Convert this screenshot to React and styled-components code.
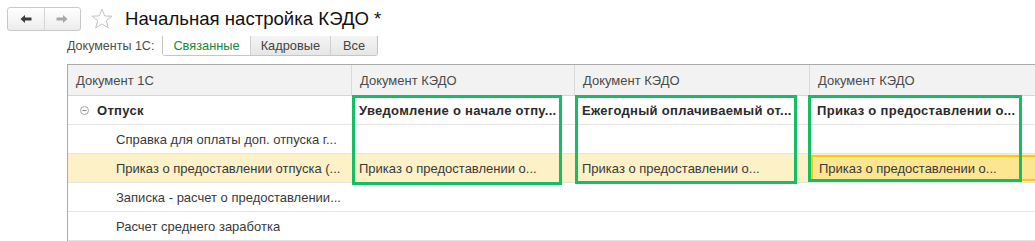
import React from "react";
import styled, { createGlobalStyle } from "styled-components";

const Global = createGlobalStyle`
  body {
    margin: 0;
    background: #fff;
    font-family: "Liberation Sans", Arial, sans-serif;
    overflow: hidden;
  }
`;

const Page = styled.div`
  width: 1035px;
  height: 241px;
  overflow: hidden;
`;

const TopBar = styled.div`
  display: flex;
  align-items: center;
  padding: 6px 0 0 7px;
  height: 25px;
`;

const NavGroup = styled.div`
  display: flex;
  width: 74px;
  height: 24px;
  border: 1px solid #c9c9c9;
  border-radius: 3px;
  background: linear-gradient(#ffffff, #ececec);
  box-sizing: border-box;
`;

const NavButton = styled.div`
  flex: 1;
  display: flex;
  align-items: center;
  justify-content: center;
  border-left: ${(p) => (p.divider ? "1px solid #d4d4d4" : "none")};
`;

const Star = styled.div`
  margin-left: 10px;
  width: 22px;
  height: 22px;
  display: flex;
`;

const Title = styled.h1`
  margin: 0 0 0 12px;
  font-size: 18.6px;
  font-weight: normal;
  color: #111;
  line-height: 22px;
`;

const FilterRow = styled.div`
  display: flex;
  align-items: center;
  margin: 5px 0 0 67px;
  height: 20px;
`;

const FilterLabel = styled.span`
  font-size: 12.5px;
  color: #4d4d4d;
  margin-right: 8px;
`;

const Tabs = styled.div`
  display: flex;
  height: 20px;
  border: 1px solid #c6c6c6;
  border-top: none;
  border-radius: 0 0 3px 3px;
  box-sizing: border-box;
`;

const Tab = styled.div`
  display: flex;
  align-items: center;
  padding: 0 ${(p) => p.pad || 10}px;
  font-size: 12.8px;
  color: ${(p) => (p.active ? "#138a42" : "#444")};
  background: ${(p) => (p.active ? "#fff" : "linear-gradient(#f4f4f4, #e6e6e6)")};
  border-left: ${(p) => (p.first ? "none" : "1px solid #cfcfcf")};
`;

const TableWrap = styled.div`
  position: relative;
  margin: 8px 0 0 67px;
  border-left: 1px solid #aaa;
  border-top: 1px solid #aaa;
`;

const Grid = styled.div`
  display: grid;
  grid-template-columns: 283px 223px 235px 230px;
`;

const HeadCell = styled.div`
  height: 30px;
  display: flex;
  align-items: center;
  padding-left: 8px;
  background: #f2f2f2;
  border-bottom: 1px solid #d6d6d6;
  border-left: ${(p) => (p.first ? "none" : "1px solid #d9d9d9")};
  font-size: 13px;
  color: #4b4b4b;
  white-space: nowrap;
`;

const Cell = styled.div`
  height: 28px;
  display: flex;
  align-items: center;
  padding-left: ${(p) => p.indent || 8}px;
  border-bottom: 1px solid #e3e3e3;
  background: ${(p) => (p.hl ? "#fcf1c7" : "#fff")};
  font-size: 13px;
  font-weight: ${(p) => (p.bold ? "bold" : "normal")};
  letter-spacing: ${(p) => (p.bold ? "0.3px" : "0")};
  color: ${(p) => (p.bold ? "#2b2b2b" : "#3a3a3a")};
  white-space: nowrap;
  overflow: hidden;
  min-width: 0;
`;

const Selected = styled.div`
  flex: 1;
  align-self: stretch;
  margin: 1px 0 1px -6px;
  padding-left: 6px;
  display: flex;
  align-items: center;
  background: #fde591;
  border: 2px solid #f6c914;
  border-right: none;
`;

const Text = styled.span`
  overflow: hidden;
  text-overflow: ellipsis;
  max-width: ${(p) => p.max}px;
`;

const Toggle = styled.span`
  width: 9px;
  height: 9px;
  margin-right: 8px;
  display: inline-flex;
`;

const Mark = styled.div`
  position: absolute;
  top: 30px;
  left: ${(p) => p.left}px;
  width: ${(p) => p.w}px;
  height: ${(p) => p.h}px;
  border: 3px solid #15bd63;
  box-sizing: border-box;
`;

const Arrow = ({ color, flip }) => (
  <svg width="12" height="10" viewBox="0 0 12 10" style={{ transform: flip ? "scaleX(-1)" : "none" }}>
    <path d="M0.5 5 L5 1 L5 3.6 L11.5 3.6 L11.5 6.4 L5 6.4 L5 9 Z" fill={color} />
  </svg>
);

const rows = [
  { a: "Отпуск", bold: true, group: true, b: "Уведомление о начале отпу...", c: "Ежегодный оплачиваемый от...", d: "Приказ о предоставлении о..." },
  { a: "Справка для оплаты доп. отпуска г..." },
  { a: "Приказ о предоставлении отпуска (...", hl: true, b: "Приказ о предоставлении о...", c: "Приказ о предоставлении о...", d: "Приказ о предоставлении о..." },
  { a: "Записка - расчет о предоставлении..." },
  { a: "Расчет среднего заработка" },
];

export default function App() {
  return (
    <Page>
      <Global />
      <TopBar>
        <NavGroup>
          <NavButton>
            <Arrow color="#3c3c3c" />
          </NavButton>
          <NavButton divider>
            <Arrow color="#a8a8a8" flip />
          </NavButton>
        </NavGroup>
        <Star>
          <svg width="22" height="22" viewBox="0 0 22 22">
            <path
              d="M11 1 L13.7 7.9 L21 8.2 L15.3 12.7 L17.3 20 L11 15.9 L4.7 20 L6.7 12.7 L1 8.2 L8.3 7.9 Z"
              fill="none"
              stroke="#c4c4c4"
              strokeWidth="1"
              strokeLinejoin="round"
            />
          </svg>
        </Star>
        <Title>Начальная настройка КЭДО *</Title>
      </TopBar>
      <FilterRow>
        <FilterLabel>Документы 1С:</FilterLabel>
        <Tabs>
          <Tab active first>Связанные</Tab>
          <Tab>Кадровые</Tab>
          <Tab pad={12}>Все</Tab>
        </Tabs>
      </FilterRow>
      <TableWrap>
        <Grid>
          <HeadCell first>Документ 1С</HeadCell>
          <HeadCell>Документ КЭДО</HeadCell>
          <HeadCell>Документ КЭДО</HeadCell>
          <HeadCell>Документ КЭДО</HeadCell>
          {rows.map((r, i) => (
            <React.Fragment key={i}>
              <Cell hl={r.hl} bold={r.bold} indent={r.group ? 12 : 48}>
                {r.group && (
                  <Toggle>
                    <svg width="9" height="9" viewBox="0 0 9 9">
                      <circle cx="4.5" cy="4.5" r="4" fill="none" stroke="#9a9a9a" strokeWidth="0.9" />
                      <path d="M2.4 4.5 H6.6" stroke="#8a8a8a" strokeWidth="1" />
                    </svg>
                  </Toggle>
                )}
                <Text max={240}>{r.a}</Text>
              </Cell>
              <Cell hl={r.hl} bold={r.bold}>
                <Text max={205}>{r.b}</Text>
              </Cell>
              <Cell hl={r.hl} bold={r.bold}>
                <Text max={215}>{r.c}</Text>
              </Cell>
              <Cell hl={r.hl} bold={r.bold}>
                {r.hl ? (
                  <Selected>
                    <Text max={200}>{r.d}</Text>
                  </Selected>
                ) : (
                  <Text max={200}>{r.d}</Text>
                )}
              </Cell>
            </React.Fragment>
          ))}
        </Grid>
        <Mark left={284} w={210} h={90} />
        <Mark left={507} w={222} h={89} />
        <Mark left={740} w={214} h={87} />
      </TableWrap>
    </Page>
  );
}
